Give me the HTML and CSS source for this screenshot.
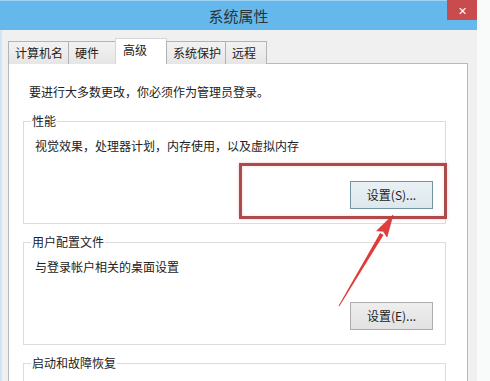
FILE: index.html
```html
<!DOCTYPE html>
<html lang="zh-CN">

<head>
  <meta charset="UTF-8">
  <meta name="viewport" content="width=device-width, initial-scale=1.0">
  <title>系统属性</title>

  <link rel="stylesheet" href="styles.css">
</head>

<body>
  <div class="window">
    <div class="titleBar">
      <div></div>
      <div class="title">系统属性</div>
      <div class="closeBtn">✕</div>
    </div>
    <div class="frame">
      <div class="tabs">
        <div class="tab tabName">计算机名</div>
        <div class="tab tabHw">硬件</div>
        <div class="tab tabAdv active">高级</div>
        <div class="tab tabProtect">系统保护</div>
        <div class="tab tabRemote">远程</div>
      </div>
      <div class="panel">
        <div class="intro">要进行大多数更改，你必须作为管理员登录。</div>

        <fieldset class="group">
          <legend>性能</legend>
          <div class="desc">视觉效果，处理器计划，内存使用，以及虚拟内存</div>
          <div class="btnRow">
            <div class="btn focused">设置(S)...</div>
          </div>
        </fieldset>

        <fieldset class="group">
          <legend>用户配置文件</legend>
          <div class="desc">与登录帐户相关的桌面设置</div>
          <div class="btnRow">
            <div class="btn">设置(E)...</div>
          </div>
        </fieldset>

        <fieldset class="group">
          <legend>启动和故障恢复</legend>
          <div class="desc faded">系统启动、系统故障和调试信息</div>
        </fieldset>
      </div>
    </div>

    <!-- 标注：红框 + 箭头 -->
    <div class="markBox"></div>
    <svg class="markArrow" width="70" height="110" viewBox="0 0 70 110">
      <polygon points="9.4,101.3 8.6,100.7 50.1,27.9 53.5,29.9" fill="#e03a3b" />
      <polygon points="63,10 57,32 53.3,26.3 46.6,25.8" fill="#e23d3d" stroke="#c83232" stroke-width="0.6" />
    </svg>
  </div>
</body>

</html>
```

FILE: styles.css
```css
* {
  box-sizing: border-box;
  padding: 0;
  margin: 0;
}

html,
body {
  height: 100%;
}

body {
  background: #f9fafa;
  font-family: "Noto Sans CJK SC", "Liberation Sans", sans-serif;
  font-size: 12px;
  color: #222;
  overflow: hidden;
}

.window {
  position: relative;
  width: 477px;
  height: 100%;
}

.titleBar {
  display: grid;
  grid-template-columns: 30px 1fr 30px;
  height: 30px;
  background: #65b8eb;
  border-top: 1px solid #9fd2f2;
}

.titleBar .title {
  font-size: 15px;
  line-height: 29px;
  text-align: center;
  color: #2e3338;
}

.titleBar .closeBtn {
  height: 20px;
  margin-top: -1px;
  background: #c84b4d;
  color: #fff;
  font-size: 11px;
  line-height: 20px;
  text-align: center;
}

.frame {
  height: calc(100% - 30px);
  padding: 8px 9px 0 6px;
  background: #f0f0f0;
  border-left: 2px solid #cfe6f6;
}

.tabs {
  display: flex;
  align-items: flex-end;
  height: 25px;
  position: relative;
  z-index: 1;
}

.tab {
  height: 23px;
  margin-right: -1px;
  margin-bottom: -1px;
  padding-left: 6px;
  line-height: 22px;
  background: linear-gradient(#f2f2f2, #e6e6e6);
  border: 1px solid #b3b3b3;
  border-bottom: none;
  white-space: nowrap;
}

.tab.active {
  height: 26px;
  padding-left: 7px;
  line-height: 22px;
  background: #fff;
  border-color: #d6d6d6;
}

.tabName { width: 61px; }
.tabHw { width: 48px; }
.tabAdv { width: 52px; }
.tabProtect { width: 60px; }
.tabRemote { width: 42px; }

.panel {
  height: 330px;
  padding: 20px 21px 0 14px;
  background: #fff;
  border: 1px solid #b9b9b9;
}

.intro {
  line-height: 16px;
  padding-left: 6px;
}

.group {
  margin-top: 10px;
  padding: 9px 12px 14px 7px;
  border: 1px solid #dcdcdc;
}

.group:first-of-type {
  margin-top: 13px;
}

.group legend {
  padding: 0 1px;
  line-height: 16px;
}

.group .desc {
  line-height: 16px;
  padding-left: 4px;
}

.group .desc.faded {
  color: #e2e2e2;
}

.btnRow {
  display: flex;
  justify-content: flex-end;
  margin-top: 27px;
}

.btn {
  width: 83px;
  height: 28px;
  line-height: 26px;
  text-align: center;
  background: linear-gradient(#eeeeee, #e2e2e2);
  border: 1px solid #adadad;
}

.btn.focused {
  background: linear-gradient(#e9f1f5, #dde8ee);
  border-color: #7495a4;
}

.markBox {
  position: absolute;
  left: 239px;
  top: 163px;
  width: 208px;
  height: 56px;
  border: 3px solid #ac4a4c;
  box-shadow: 0 0 3px rgba(230, 90, 90, .35), inset 0 0 3px rgba(230, 90, 90, .25);
}

.markArrow {
  position: absolute;
  left: 330px;
  top: 205px;
}
```
